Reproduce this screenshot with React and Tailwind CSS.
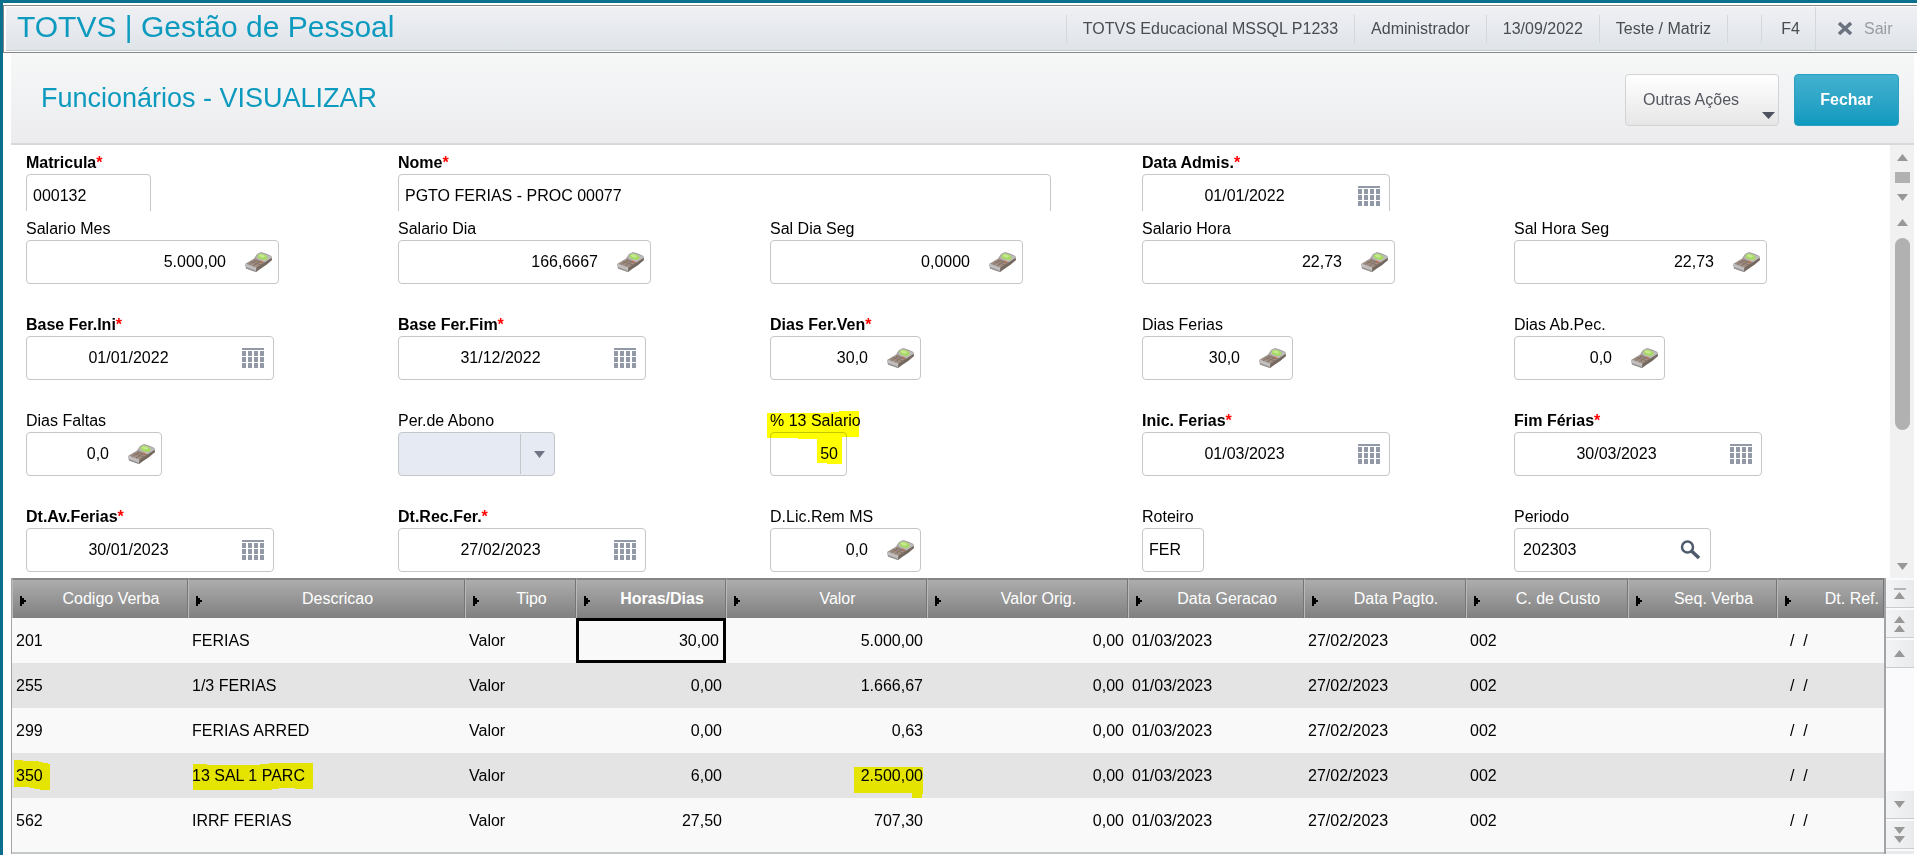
import clsx from "clsx";

const topFields = [
  { id: "matricula", label: "Matricula", required: true, value: "000132", width: "w-[125px]" },
  { id: "nome", label: "Nome", required: true, value: "PGTO FERIAS - PROC 00077", width: "w-[653px]", span: true },
  { id: "admissao", label: "Data Admis.", required: true, type: "date", value: "01/01/2022", width: "w-[248px]" },
];

const fields = [
  { id: "salMes", label: "Salario Mes", type: "calc", value: "5.000,00", width: "w-[253px]" },
  { id: "salDia", label: "Salario Dia", type: "calc", value: "166,6667", width: "w-[253px]" },
  { id: "salDiaSeg", label: "Sal Dia Seg", type: "calc", value: "0,0000", width: "w-[253px]" },
  { id: "salHora", label: "Salario Hora", type: "calc", value: "22,73", width: "w-[253px]" },
  { id: "salHoraSeg", label: "Sal Hora Seg", type: "calc", value: "22,73", width: "w-[253px]" },
  { id: "baseIni", label: "Base Fer.Ini", required: true, type: "date", value: "01/01/2022", width: "w-[248px]" },
  { id: "baseFim", label: "Base Fer.Fim", required: true, type: "date", value: "31/12/2022", width: "w-[248px]" },
  { id: "diasVen", label: "Dias Fer.Ven", required: true, type: "calc", value: "30,0", width: "w-[151px]" },
  { id: "diasFerias", label: "Dias Ferias", type: "calc", value: "30,0", width: "w-[151px]" },
  { id: "diasAbono", label: "Dias Ab.Pec.", type: "calc", value: "0,0", width: "w-[151px]" },
  { id: "diasFaltas", label: "Dias Faltas", type: "calc", value: "0,0", width: "w-[136px]" },
  { id: "perAbono", label: "Per.de Abono", type: "select", value: "", width: "w-[157px]" },
  { id: "perc13", label: "% 13 Salario", type: "number", value: "50", width: "w-[77px]", marked: true },
  { id: "inicFerias", label: "Inic. Ferias", required: true, type: "date", value: "01/03/2023", width: "w-[248px]" },
  { id: "fimFerias", label: "Fim Férias", required: true, type: "date", value: "30/03/2023", width: "w-[248px]" },
  { id: "dtAviso", label: "Dt.Av.Ferias", required: true, type: "date", value: "30/01/2023", width: "w-[248px]" },
  { id: "dtRecibo", label: "Dt.Rec.Fer.", required: true, type: "date", value: "27/02/2023", width: "w-[248px]" },
  { id: "licRem", label: "D.Lic.Rem MS", type: "calc", value: "0,0", width: "w-[151px]" },
  { id: "roteiro", label: "Roteiro", value: "FER", width: "w-[62px]" },
  { id: "periodo", label: "Periodo", type: "search", value: "202303", width: "w-[197px]" },
];

const columns = [
  { title: "Codigo Verba", width: "w-[176px]" },
  { title: "Descricao", width: "w-[277px]" },
  { title: "Tipo", width: "w-[111px]" },
  { title: "Horas/Dias", width: "w-[150px]", right: true, bold: true },
  { title: "Valor", width: "w-[201px]", right: true },
  { title: "Valor Orig.", width: "w-[201px]", right: true },
  { title: "Data Geracao", width: "w-[176px]" },
  { title: "Data Pagto.", width: "w-[162px]" },
  { title: "C. de Custo", width: "w-[162px]" },
  { title: "Seq. Verba", width: "w-[149px]" },
  { title: "Dt. Ref.", last: true },
];

const rows = [
  ["201", "FERIAS", "Valor", "30,00", "5.000,00", "0,00", "01/03/2023", "27/02/2023", "002", "", "  /  /"],
  ["255", "1/3 FERIAS", "Valor", "0,00", "1.666,67", "0,00", "01/03/2023", "27/02/2023", "002", "", "  /  /"],
  ["299", "FERIAS ARRED", "Valor", "0,00", "0,63", "0,00", "01/03/2023", "27/02/2023", "002", "", "  /  /"],
  ["350", "13 SAL 1 PARC", "Valor", "6,00", "2.500,00", "0,00", "01/03/2023", "27/02/2023", "002", "", "  /  /"],
  ["562", "IRRF FERIAS", "Valor", "27,50", "707,30", "0,00", "01/03/2023", "27/02/2023", "002", "", "  /  /"],
];

// marker strokes over row 350, by column index
const marks = {
  0: { place: "left-0.5 top-[7px]", w: 36, h: 30, points: "0,0 9,0 9,1 25,1 25,2 29,2 29,3 34,3 34,4 36,4 36,30 26,30 26,29 20,29 20,28 16,28 16,27 0,27" },
  1: { place: "left-[5px] top-2.5", w: 120, h: 27, points: "0,1 14,1 14,2 67,2 67,1 76,1 76,0 120,0 120,26 102,26 102,25 86,25 86,26 79,26 79,27 0,27" },
  4: { place: "right-1 top-3.5", w: 69, h: 31, points: "0,0 69,0 69,27 68,27 68,31 58,31 58,26 0,26" },
};

const Mark = ({ place, w, h, points }) => (
  <svg className={clsx("absolute mix-blend-multiply pointer-events-none", place)} width={w} height={h}>
    <polygon points={points} fill="#ffff00" />
  </svg>
);

const CalendarIcon = () => (
  <svg width="22" height="20" viewBox="0 0 22 20" fill="#9299a6" shapeRendering="crispEdges">
    <rect width="22" height="2" />
    {[3, 9, 15].map((y) => [0, 6, 12, 18].map((x) => <rect key={`${x}-${y}`} x={x} y={y} width="4" height="5" />))}
  </svg>
);

const CalcIcon = () => (
  <svg width="27" height="20" viewBox="0 0 27 20">
    <path d="M0 12 9 6.500 12 2 16 0 21 1.500 26.500 4 27 8 21 13 15 17 11 20 8 19 1 16.500z" fill="#a5a09e" />
    <path d="M1.500 11.500 10 7 20 10.500 12 15.500z" fill="#a08f84" />
    <path d="M11 6 13 2 16 1 26 4.500 25.500 7 20 10.500z" fill="#bdbcba" />
    <ellipse cx="17.500" cy="4.800" rx="5.200" ry="2.900" transform="rotate(14 17.500 4.800)" fill="#a9d964" />
    <ellipse cx="17" cy="4" rx="3" ry="1.300" transform="rotate(14 17 4)" fill="#c6ec92" />
    <path d="M0 12 1.500 12 11 15.500 11 20 8 19 1 16.500z" fill="#c2bebd" />
    <path d="M1 15 10.500 18.500 11 20 8 19 1 16.500z" fill="#969393" />
    <path d="M11.500 15.500 26.500 6 27 8 21 13 15 17 11 20z" fill="#75685f" />
    <path d="M6 9.500 16 13M9 8 19 11.300M4 12.500 12 8M8 14 16 9" stroke="#877469" fill="none" />
    <path d="M15 9.200 18 10.200" stroke="#cf6a50" strokeWidth="1.200" />
  </svg>
);

const SearchIcon = () => (
  <svg width="20" height="20" viewBox="0 0 20 20" fill="none" stroke="#4f5b6c">
    <circle cx="7.500" cy="7" r="5.500" strokeWidth="2.500" />
    <path d="M11.500 11 19 18" strokeWidth="3.500" />
  </svg>
);

const Triangle = ({ down, className = "text-[#989898]" }) => (
  <svg width="11" height="7" viewBox="0 0 11 7" className={className}>
    <path d={down ? "M0 0h11L5.500 7z" : "M0 7h11L5.500 0z"} fill="currentColor" />
  </svg>
);

const buttonIcons = { date: CalendarIcon, calc: CalcIcon, search: SearchIcon };

const Field = ({ id, label, required, type, value, width, span, marked }) => {
  const Icon = buttonIcons[type];

  return (
    <div className={clsx("relative", span && "col-span-2")}>
      <label htmlFor={id} className={clsx("block h-[21px] leading-5", required && "font-bold")}>
        {label}
        {required && <span className="text-[#ff0000]">*</span>}
      </label>
      {type === "select" ? (
        <div className={clsx("relative", width)}>
          <select
            id={id}
            defaultValue={value}
            className="h-11 w-full appearance-none rounded border border-[#c3c7c9] bg-[#e6eaf3] px-1.5"
          >
            <option value=""></option>
          </select>
          <span className="absolute inset-y-0.5 right-0 flex w-[35px] items-center justify-center border-l border-[#c3c7c9] pl-0.5 pointer-events-none">
            <Triangle down className="text-[#6f7583]" />
          </span>
        </div>
      ) : (
        <div className={clsx("flex h-11 rounded border border-[#c3c7c9] bg-white", width)}>
          <input
            id={id}
            type="text"
            readOnly
            defaultValue={value}
            className={clsx(
              "w-full min-w-0 flex-1 bg-transparent outline-none",
              type === "date" && "pl-1.5 pr-2 text-center",
              type === "calc" && "px-1.5 text-right",
              type === "number" && "px-2 text-right",
              type === "search" && "px-2",
              !type && "px-1.5"
            )}
          />
          {Icon && (
            <button
              type="button"
              aria-label={label}
              className={clsx(
                "flex shrink-0 items-center",
                type === "calc" ? "w-[46px] justify-end pr-1.5" : "w-[41px] justify-center"
              )}
            >
              <Icon />
            </button>
          )}
        </div>
      )}
      {marked && (
        <Mark
          place="-left-[3px] top-0"
          w={92}
          h={53}
          points="0,2 64,2 64,1 72,1 72,0 92,0 92,26 75,26 75,53 60,53 60,52 50,52 50,28 31,28 31,27 0,27"
        />
      )}
    </div>
  );
};

const TopBar = () => (
  <header className="mt-0.5 flex h-12 border border-r-0 border-[#858585] bg-white pl-0.5 pt-px pb-px">
    <div className="flex flex-1 items-center border-b border-[#c3cad0] bg-linear-to-b from-[#eff0f4] to-[#dfe4e9]">
      <h1 className="flex-1 pb-1 pl-[11px] text-[30px] leading-8 text-[#0c9abe]">TOTVS | Gestão de Pessoal</h1>
      <div className="flex h-7 items-center leading-7 text-[#4a4c4f]">
        <span className="border-l border-[#d3d8db] px-4">TOTVS Educacional MSSQL P1233</span>
        <span className="border-l border-[#d3d8db] px-4">Administrador</span>
        <span className="border-l border-[#d3d8db] px-4">13/09/2022</span>
        <span className="border-l border-[#d3d8db] px-4">Teste / Matriz</span>
        <span className="h-7 w-[34px] border-l border-[#d3d8db]"></span>
        <span className="w-[54px] border-l border-[#d3d8db] pl-1 text-center">F4</span>
      </div>
      <button type="button" className="flex h-full w-[102px] items-center gap-3 border-l border-[#d3d8db] pl-[22px] text-[#989da4]">
        <svg width="14" height="13" viewBox="0 0 14 13" stroke="#6c7380" strokeWidth="3.500">
          <path d="M1 1 13 12M13 1 1 12" />
        </svg>
        Sair
      </button>
    </div>
  </header>
);

const TitleBar = () => (
  <div className="ml-2 mr-[3px] flex h-[92px] items-center gap-[15px] border-b-2 border-[#d6d8da] bg-linear-to-b from-[#f6f8f8] to-[#ececee] pr-[15px] pt-[3px]">
    <h2 className="flex-1 pb-1 pl-[30px] text-[27px] leading-8 text-[#0c9abe]">Funcionários - VISUALIZAR</h2>
    <button
      type="button"
      className="relative h-[52px] w-[154px] rounded border border-[#d2d3d5] bg-linear-to-b from-white to-[#e6e6e7] pl-[17px] text-left text-[#54575f]"
    >
      Outras Ações
      <svg width="13" height="7" viewBox="0 0 13 7" className="absolute bottom-1.5 right-[3px]">
        <path d="M0 0h13L6.500 7z" fill="#4e525f" />
      </svg>
    </button>
    <button
      type="button"
      className="h-[52px] w-[105px] rounded border border-[#2b9fbf] bg-linear-to-b from-[#42b1cf] to-[#0c9abf] font-bold text-white"
    >
      Fechar
    </button>
  </div>
);

const NavButton = ({ bar, count = 1, down, label }) => (
  <button
    type="button"
    aria-label={label}
    className="flex h-7 w-full shrink-0 flex-col items-center justify-center gap-0.5 border-b border-[#c9cbcc] bg-linear-to-r from-[#f3f4f5] to-[#e9eaeb] pr-px"
  >
    {bar && <span className="h-0.5 w-3 bg-[#b5b5b5]"></span>}
    {Array.from({ length: count }, (_, i) => (
      <Triangle key={i} down={down} />
    ))}
  </button>
);

const Grid = () => (
  <div className="ml-2 mr-[3px] flex">
    <div className="flex-1 border-l border-r-2 border-[#a2a4a5]">
      <table className="w-full table-fixed border-separate border-spacing-0">
        <thead>
          <tr className="h-10">
            {columns.map((col) => (
              <th
                key={col.title}
                className={clsx(
                  "relative border-l border-r border-t-2 border-l-[#b9b9b9] border-r-[#757575] border-t-[#858585] bg-linear-to-b from-[#adadad] to-[#808080] py-0 text-white whitespace-nowrap",
                  col.width,
                  col.last ? "pr-1 text-right" : "pl-[22px] pr-0",
                  col.bold ? "font-bold" : "font-normal"
                )}
              >
                <svg width="6" height="10" viewBox="0 0 6 10" className="absolute left-[7px] top-4">
                  <path d="M0 0h2v2h2v2h2v2h-2v2h-2v2h-2z" />
                </svg>
                {col.title}
              </th>
            ))}
          </tr>
        </thead>
        <tbody>
          {rows.map((row, r) => (
            <tr key={row[0]} className="h-[45px] odd:bg-[#f9f9f9] even:bg-[#e4e4e4]">
              {row.map((cell, c) => (
                <td
                  key={columns[c].title}
                  className={clsx(
                    "relative px-1 py-0 whitespace-pre",
                    columns[c].right && "text-right",
                    r === 0 && c === 3 && "border-3 border-black"
                  )}
                >
                  {cell}
                  {row[0] === "350" && marks[c] && <Mark {...marks[c]} />}
                </td>
              ))}
            </tr>
          ))}
        </tbody>
      </table>
      <div className="h-[11px] border-b-2 border-[#c5c8c9] bg-[#f9f9f9]"></div>
    </div>
    <div className="flex w-7 flex-col gap-0.5 bg-[#fafafc] pt-0.5">
      <NavButton bar label="Primeiro registro" />
      <NavButton count={2} label="Página anterior" />
      <NavButton label="Registro anterior" />
      <div className="flex-1"></div>
      <NavButton down label="Próximo registro" />
      <NavButton count={2} down label="Próxima página" />
      <span className="h-[3px] bg-[#e9eaeb]"></span>
    </div>
  </div>
);

export default function App() {
  return (
    <div className="min-h-screen overflow-hidden border-l-3 border-t-3 border-[#0b708d] bg-white font-['Liberation_Sans',Arial,sans-serif] text-[16px] text-black">
      <TopBar />
      <TitleBar />
      <main className="ml-2 mr-[3px]">
        <div className="flex">
          <div className="grid h-[66px] flex-1 grid-cols-5 overflow-hidden pl-[15px] pr-1 pt-2">
            {topFields.map((field) => (
              <Field key={field.id} {...field} />
            ))}
          </div>
          <div className="flex w-6 flex-col items-center justify-between bg-[#f1f1f1] pb-2.5 pt-[9px]">
            <Triangle />
            <span className="h-[11px] w-[15px] bg-[#b1b1b1]"></span>
            <Triangle down />
          </div>
        </div>
        <div className="flex">
          <div className="grid flex-1 grid-cols-5 gap-y-[31px] pb-1.5 pl-[15px] pr-1 pt-2">
            {fields.map((field) => (
              <Field key={field.id} {...field} />
            ))}
          </div>
          <div className="flex w-6 flex-col items-center bg-[#f1f1f1] pb-2 pt-2">
            <Triangle />
            <span className="mt-3 h-[192px] w-[15px] rounded-full bg-[#b1b1b1]"></span>
            <span className="flex-1"></span>
            <Triangle down />
          </div>
        </div>
      </main>
      <Grid />
    </div>
  );
}
